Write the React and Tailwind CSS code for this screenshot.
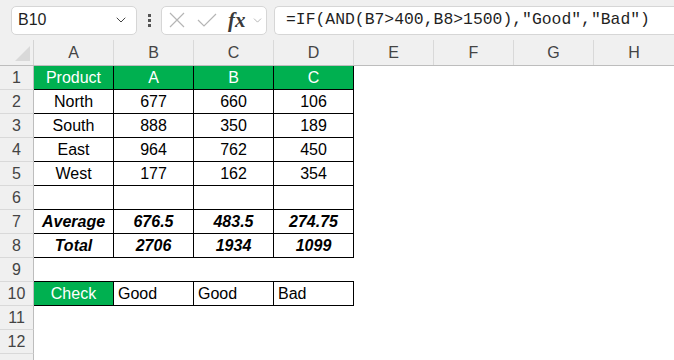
import React from 'react';
import { ChevronDown } from 'lucide-react';

// ── Sheet data ────────────────────────────────────────────────────────────────

const COLS = ['A', 'B', 'C', 'D', 'E', 'F', 'G', 'H'];

const ROWS = [
  { kind: 'head', cells: ['Product', 'A', 'B', 'C'] },
  { kind: 'plain', cells: ['North', '677', '660', '106'] },
  { kind: 'plain', cells: ['South', '888', '350', '189'] },
  { kind: 'plain', cells: ['East', '964', '762', '450'] },
  { kind: 'plain', cells: ['West', '177', '162', '354'] },
  { kind: 'plain', cells: ['', '', '', ''] },
  { kind: 'bold', cells: ['Average', '676.5', '483.5', '274.75'] },
  { kind: 'bold', cells: ['Total', '2706', '1934', '1099'] },
  { kind: 'gap' },
  { kind: 'check', cells: ['Check', 'Good', 'Good', 'Bad'] },
  { kind: 'empty' },
  { kind: 'empty' },
];

const FONT = { fontFamily: '"Liberation Sans", Arial, sans-serif' };

// ── Formula bar ───────────────────────────────────────────────────────────────

const FormulaBar = () => (
  <div className="flex items-center h-[40px] bg-[#f0f0f0] pl-[11px]">
    <div className="flex items-center justify-between w-[126px] h-[29px] bg-white border border-[#d6d6d6] rounded-[5px] pl-[6px] pr-[7px]">
      <span className="text-[16px] text-[#1f1f1f]">B10</span>
      <ChevronDown size={16} strokeWidth={1.5} className="text-[#444]" />
    </div>

    <div className="flex flex-col gap-[2px] mx-[10px] w-[4px] items-center">
      <span className="block w-[3px] h-[3px] bg-[#555]" />
      <span className="block w-[3px] h-[3px] bg-[#555]" />
      <span className="block w-[3px] h-[3px] bg-[#555]" />
    </div>

    <div className="flex items-center w-[106px] h-[29px] bg-white border border-[#d6d6d6] rounded-[5px]">
      <svg width="16" height="16" viewBox="0 0 16 16" className="ml-[7px]">
        <path d="M1 1 L15 15 M15 1 L1 15" stroke="#b5b5b5" strokeWidth="1.2" fill="none" />
      </svg>
      <svg width="20" height="16" viewBox="0 0 20 16" className="ml-[12px]">
        <path d="M1 8 L7 14 L19 2" stroke="#b5b5b5" strokeWidth="1.2" fill="none" />
      </svg>
      <span
        className="ml-[11px] text-[21px] italic font-bold text-[#3a3a3a] leading-none"
        style={{ fontFamily: '"Liberation Serif", "Times New Roman", serif' }}
      >
        fx
      </span>
      <ChevronDown size={13} strokeWidth={1.3} className="ml-[5px] text-[#9a9a9a]" />
    </div>

    <div className="flex items-center flex-1 h-[29px] ml-[7px] bg-white border border-[#d6d6d6] border-r-0 rounded-l-[5px] pl-[11px]">
      <span
        className="text-[16.4px] text-[#1f1f1f] whitespace-nowrap"
        style={{ fontFamily: '"Liberation Mono", "Courier New", monospace' }}
      >
        =IF(AND(B7&gt;400,B8&gt;1500),"Good","Bad")
      </span>
    </div>
  </div>
);

// ── Grid ──────────────────────────────────────────────────────────────────────

const ColumnHeader = () => (
  <div className="flex h-[26px] bg-[#f0f0f0] border-b border-[#bdbdbd]">
    <div className="relative w-[34px] h-full border-r border-[#d4d4d4]">
      <div className="absolute right-[3px] bottom-[4px] w-0 h-0 border-l-[15px] border-l-transparent border-b-[15px] border-b-[#d9d9d9]" />
    </div>
    {COLS.map((c) => (
      <div
        key={c}
        className="w-[80px] h-full flex items-center justify-center border-r border-[#d9d9d9] text-[16px] text-[#444] last:border-r-0"
      >
        {c}
      </div>
    ))}
  </div>
);

const RowHeader = ({ n }) => (
  <div className="w-[34px] h-[24px] shrink-0 flex items-center justify-center bg-[#f0f0f0] border-r border-r-[#bdbdbd] border-b border-b-[#d9d9d9] text-[16px] text-[#444]">
    {n}
  </div>
);

const cellClass = (kind, i) => {
  const base = 'w-[80px] h-[24px] shrink-0 flex items-center border-r border-b border-black text-[16px] whitespace-nowrap overflow-hidden';
  if (kind === 'head') return `${base} justify-center bg-[#00b050] text-white`;
  if (kind === 'bold') return `${base} justify-center bg-white font-bold italic text-black`;
  if (kind === 'check') {
    return i === 0
      ? `${base} justify-center bg-[#00b050] text-white`
      : `${base} pl-[4px] bg-white text-black`;
  }
  return `${base} justify-center bg-white text-black`;
};

const SheetRow = ({ row, n }) => (
  <div className="flex h-[24px]">
    <RowHeader n={n} />
    {row.cells
      ? row.cells.map((v, i) => (
          <div key={i} className={cellClass(row.kind, i)}>
            {v}
          </div>
        ))
      : row.kind === 'gap'
      ? [0, 1, 2, 3].map((i) => (
          <div key={i} className="w-[80px] h-[24px] shrink-0 border-b border-black" />
        ))
      : null}
  </div>
);

const App = () => (
  <div className="w-[674px] h-[360px] overflow-hidden bg-white" style={FONT}>
    <FormulaBar />
    <ColumnHeader />
    {ROWS.map((row, idx) => (
      <SheetRow key={idx} row={row} n={idx + 1} />
    ))}
    {/* partial row 13 below the fold: header strip only */}
    <div className="w-[34px] h-[24px] bg-[#f0f0f0] border-r border-[#bdbdbd]" />
  </div>
);

export default App;
